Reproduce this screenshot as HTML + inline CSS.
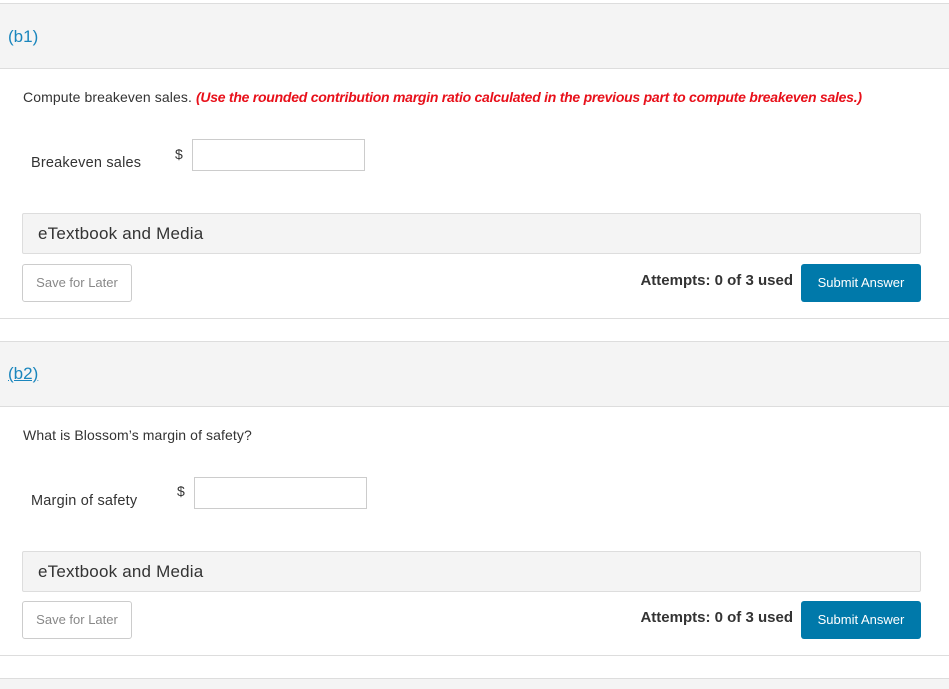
<!DOCTYPE html><html><head><style>
body{margin:0;width:949px;height:683px;position:relative;overflow:hidden;background:#fff;font-family:"Liberation Sans",sans-serif;color:#333}
div,span{position:absolute}
.hdr{left:0;width:949px;background:#f4f4f4;border-top:1px solid #ddd;border-bottom:1px solid #ddd}
.ttl{left:8px;font-size:17px;color:#1a86bd}
.q{left:23px;font-size:14px;color:#333;white-space:nowrap;letter-spacing:0.1px}
.lbl{left:31px;font-size:14.5px;white-space:nowrap;letter-spacing:0.2px}
.dol{font-size:14px}
.inp{width:171px;height:30px;border:1px solid #ccc;background:#fff}
.etb{left:22px;width:897px;height:39px;background:#f4f4f4;border:1px solid #ddd;border-radius:2px;font-size:17px;line-height:39px;text-indent:15px;letter-spacing:0.2px}
.save{left:22px;width:108px;height:36px;border:1px solid #ccc;border-radius:3px;font-size:13px;color:#888;line-height:36px;text-align:center}
.att{right:156px;font-size:15px;font-weight:bold;color:#333;white-space:nowrap}
.sub{left:801px;width:120px;height:38px;background:#0079aa;border-radius:3px;color:#fff;font-size:13px;line-height:38px;text-align:center}
.line{left:0;width:949px;height:1px;background:#ddd}
</style></head><body>
<div class="hdr" style="top:3px;height:64px"></div>
<div class="ttl" style="top:27px">(b1)</div>
<div class="q" style="top:89px">Compute breakeven sales. <i style="color:#e8101a;font-weight:bold;letter-spacing:-0.25px">(Use the rounded contribution margin ratio calculated in the previous part to compute breakeven sales.)</i></div>
<div class="lbl" style="top:155px">Breakeven sales</div>
<div class="dol" style="left:175px;top:146px">$</div>
<div class="inp" style="left:192px;top:139px"></div>
<div class="etb" style="top:213px">eTextbook and Media</div>
<div class="save" style="top:264px">Save for Later</div>
<div class="att" style="top:272px">Attempts: 0 of 3 used</div>
<div class="sub" style="top:264px">Submit Answer</div>
<div class="line" style="top:318px"></div>

<div class="hdr" style="top:341px;height:64px"></div>
<div class="ttl" style="top:364px;text-decoration:underline">(b2)</div>
<div class="q" style="top:427px">What is Blossom’s margin of safety?</div>
<div class="lbl" style="top:493px">Margin of safety</div>
<div class="dol" style="left:177px;top:483px">$</div>
<div class="inp" style="left:194px;top:477px"></div>
<div class="etb" style="top:551px">eTextbook and Media</div>
<div class="save" style="top:601px">Save for Later</div>
<div class="att" style="top:609px">Attempts: 0 of 3 used</div>
<div class="sub" style="top:601px">Submit Answer</div>
<div class="line" style="top:655px"></div>
<div class="hdr" style="top:678px;height:10px;border-bottom:none"></div>
</body></html>
